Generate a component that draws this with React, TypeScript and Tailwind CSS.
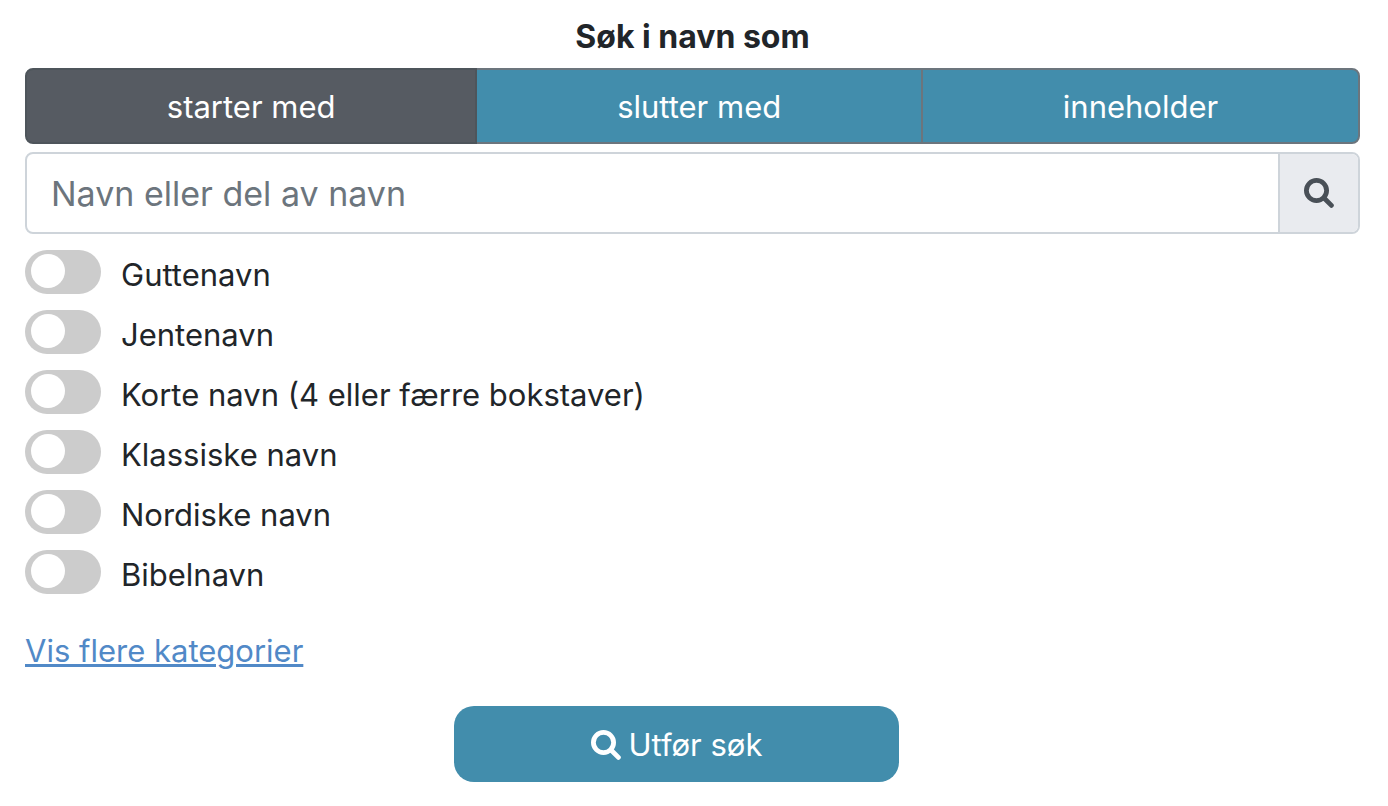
import { useState } from "react";

const modes = [
  { id: "start", label: "starter med" },
  { id: "end", label: "slutter med" },
  { id: "contains", label: "inneholder" },
];

const categories = [
  "Guttenavn",
  "Jentenavn",
  "Korte navn (4 eller færre bokstaver)",
  "Klassiske navn",
  "Nordiske navn",
  "Bibelnavn",
];

function SearchIcon() {
  return (
    <svg viewBox="0 0 30 30" className="size-[30px] shrink-0" fill="none" stroke="currentColor" strokeWidth="4.8" aria-hidden="true">
      <circle cx="12.5" cy="12.5" r="10.1" />
      <path d="M20 20l7.4 7.4" strokeLinecap="round" />
    </svg>
  );
}

function Toggle({ label }: { label: string }) {
  return (
    <label className="flex h-15 cursor-pointer items-start gap-5">
      <input
        type="checkbox"
        className="h-11 w-19 shrink-0 appearance-none rounded-full bg-[#ccc] p-1 before:ml-0.5 before:block before:size-[34px] before:rounded-full before:bg-white checked:bg-[#428dac] checked:before:ml-8"
      />
      <span className="leading-[50px]">{label}</span>
    </label>
  );
}

export default function App() {
  const [mode, setMode] = useState("start");

  return (
    <form
      onSubmit={(e) => e.preventDefault()}
      className="bg-white pt-[13px] pr-7 pb-6 pl-[25px] font-['Inter',sans-serif] text-[31px] leading-12 text-[#212529]"
    >
      <h2 className="text-center text-[32px] font-bold">Søk i navn som</h2>

      <div className="mt-[7px] flex h-19">
        {modes.map((m) => (
          <button
            key={m.id}
            type="button"
            aria-pressed={mode === m.id}
            onClick={() => setMode(m.id)}
            className={`-ml-0.5 flex-auto border-2 pt-0.5 text-white first:ml-0 first:rounded-l-lg last:rounded-r-lg ${
              mode === m.id ? "z-10 border-[#4e555b] bg-[#565b62]" : "border-[#6c757d] bg-[#428dac]"
            }`}
          >
            {m.label}
          </button>
        ))}
      </div>

      <div className="mt-2 flex h-[82px] overflow-hidden rounded-lg border-2 border-[#ced4da]">
        <input
          type="text"
          aria-label="Navn eller del av navn"
          placeholder="Navn eller del av navn"
          className="min-w-0 grow px-6 pt-0.5 text-[34px] outline-none placeholder:text-[#6c757d]"
        />
        <button
          type="submit"
          aria-label="Søk"
          className="grid w-20 place-items-center border-l-2 border-[#ced4da] bg-[#e9ebef] text-[#495057]"
        >
          <SearchIcon />
        </button>
      </div>

      <div className="mt-4">
        {categories.map((c) => (
          <Toggle key={c} label={c} />
        ))}
      </div>

      <a href="#" className="mt-[17px] inline-block text-[#5189c7] underline decoration-3">
        Vis flere kategorier
      </a>

      <div className="mt-[31px] flex justify-center">
        <button
          type="submit"
          className="mr-8 flex h-19 w-1/3 items-center justify-center gap-2 rounded-[20px] bg-[#428dac] pt-0.5 text-white"
        >
          <SearchIcon />
          Utfør søk
        </button>
      </div>
    </form>
  );
}
